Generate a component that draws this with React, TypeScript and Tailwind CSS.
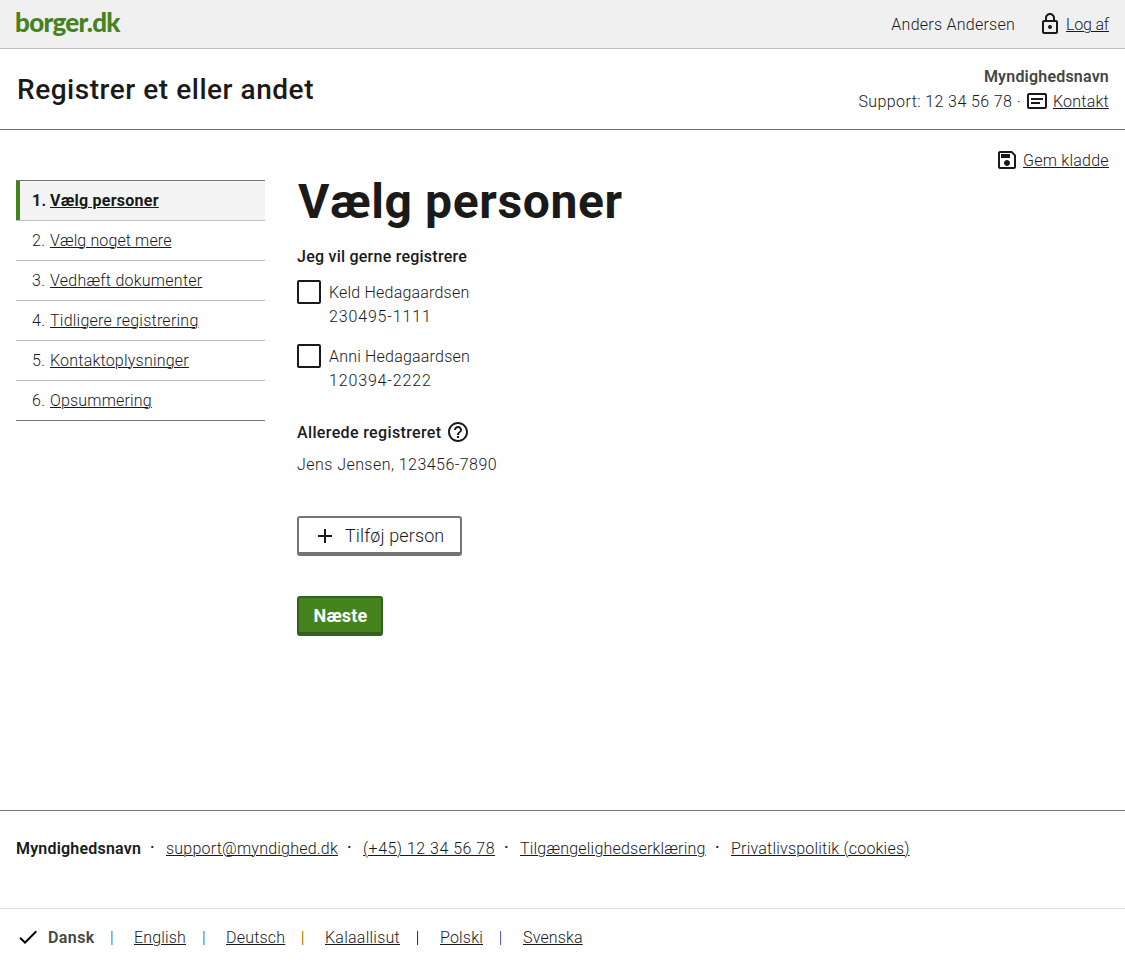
import type { ReactNode } from "react";

function Icon({ children, className = "" }: { children: ReactNode; className?: string }) {
  return (
    <svg viewBox="0 0 24 24" fill="currentColor" className={`size-6 shrink-0 ${className}`} aria-hidden="true">
      {children}
    </svg>
  );
}

const LINK = "underline decoration-1 underline-offset-[1px]";

const steps = [
  { label: "Vælg personer", tracking: "tracking-[0.25px]" },
  { label: "Vælg noget mere", tracking: "tracking-[0.12px]" },
  { label: "Vedhæft dokumenter", tracking: "tracking-[0.25px]" },
  { label: "Tidligere registrering", tracking: "tracking-[0.24px]" },
  { label: "Kontaktoplysninger", tracking: "tracking-[0.21px]" },
  { label: "Opsummering", tracking: "tracking-[0.17px]" },
];

const people = [
  { name: "Keld Hedagaardsen", cpr: "230495-1111" },
  { name: "Anni Hedagaardsen", cpr: "120394-2222" },
];

const footerLinks = [
  { label: "support@myndighed.dk", style: "w-[172px] tracking-[0.22px]" },
  { label: "(+45) 12 34 56 78", style: "w-[132px] tracking-[0.49px]" },
  { label: "Tilgængelighedserklæring", style: "w-[186px] tracking-[0.21px]" },
  { label: "Privatlivspolitik (cookies)", style: "w-[179px] tracking-[0.21px]" },
];

const languages = [
  { label: "English", style: "w-[52px] tracking-[0.16px]", bar: "border-[#d0a050] bg-[#90c8ff]" },
  { label: "Deutsch", style: "w-[59px] tracking-[0.2px]", bar: "border-[#d0a050] bg-[#90c8ff]" },
  { label: "Kalaallisut", style: "w-[75px] tracking-[0.25px]", bar: "border-[#c8921e] bg-[#bfe0f8]" },
  { label: "Polski", style: "w-[43px] tracking-[0.18px]", bar: "border-[#6b1a70] bg-[#e4f4e0]" },
  { label: "Svenska", style: "w-[60px] tracking-[0.15px]", bar: "border-[#6060b0] bg-[#f4ecd8]" },
];

function TopBar() {
  return (
    <header className="flex h-[49px] items-center justify-between border-b border-[#bfbfbf] bg-[#f0f0f0] px-4">
      <a className="-ml-px pb-1 font-['Lato',sans-serif] text-[26px] leading-none font-black tracking-[-0.7px] text-[#45831e]">
        borger.dk
      </a>
      <div className="flex items-center">
        <span className="mr-[23px] pt-0.5 tracking-[0.25px]">Anders Andersen</span>
        <Icon className="mr-1">
          <path d="M18 8h-1V6c0-2.76-2.24-5-5-5S7 3.24 7 6v2H6c-1.1 0-2 .9-2 2v10c0 1.1.9 2 2 2h12c1.1 0 2-.9 2-2V10c0-1.1-.9-2-2-2M9 6c0-1.66 1.34-3 3-3s3 1.34 3 3v2H9zm9 14H6V10h12zm-6-3c1.1 0 2-.9 2-2s-.9-2-2-2-2 .9-2 2 .9 2 2 2" />
        </Icon>
        <a className={`${LINK} w-[43px] pt-0.5 tracking-[-0.18px] whitespace-nowrap`}>Log af</a>
      </div>
    </header>
  );
}

function TitleBar() {
  return (
    <div className="flex h-[81px] items-center justify-between border-b border-[#747474] pr-4 pl-[17px]">
      <div className="pt-0.5 text-[28px] leading-8 font-medium tracking-[0.54px]">Registrer et eller andet</div>
      <div className="flex flex-col items-end">
        <div className="-mb-px pt-px font-semibold tracking-[0.2px] text-[#454545]">Myndighedsnavn</div>
        <div className="flex h-[26px] items-center">
          <span className="mr-1 pt-0.5 tracking-[0.4px]">Support: 12 34 56 78 ·</span>
          <Icon className="mr-1">
            <path d="M20 4H4c-1.1 0-1.99.9-1.99 2L2 18c0 1.1.9 2 2 2h16c1.1 0 2-.9 2-2V6c0-1.1-.9-2-2-2m0 14H4V6h16zM6 9h12v2H6zm0 4h9v2H6z" />
          </Icon>
          <a className={`${LINK} w-14 pt-0.5 tracking-[0.21px]`}>Kontakt</a>
        </div>
      </div>
    </div>
  );
}

function StepNav() {
  return (
    <nav className="w-[249px] shrink-0">
      <ol className="border-t border-[#747474]">
        {steps.map((s, i) => (
          <li
            key={s.label}
            className={`flex h-10 items-center border-b ${i === steps.length - 1 ? "border-[#747474]" : "border-[#bfbfbf]"}`}
          >
            <div className={`flex h-full flex-1 items-center ${i === 0 ? "border-l-4 border-[#45831e] bg-[#f4f4f4] pl-3 font-bold" : "pl-4"}`}>
              <span className="w-[18px] tracking-[0.4px]">{i + 1}.</span>
              <a className={`${LINK} ${s.tracking}`}>{s.label}</a>
            </div>
          </li>
        ))}
      </ol>
    </nav>
  );
}

function Content() {
  return (
    <section>
      <h1 className="ml-px text-5xl leading-[43px] font-bold tracking-[0.62px]">Vælg personer</h1>
      <h2 className="mt-[22px] font-medium tracking-[0.24px]">Jeg vil gerne registrere</h2>
      <div className="mt-[11px] flex flex-col gap-4">
        {people.map((p) => (
          <label key={p.cpr} className="flex gap-2">
            <span className="size-6 rounded-xs border-2 border-[#1a1a1a] bg-white" />
            <span className="-mb-px flex flex-col pt-px">
              <span className="tracking-[0.2px]">{p.name}</span>
              <span className="tracking-[0.85px]">{p.cpr}</span>
            </span>
          </label>
        ))}
      </div>
      <h2 className="mt-7 flex h-6 items-center font-medium">
        <span className="w-[149px] pt-0.5 tracking-[0.36px]">Allerede registreret</span>
        <Icon>
          <path d="M11 18h2v-2h-2zm1-16C6.48 2 2 6.48 2 12s4.48 10 10 10 10-4.48 10-10S17.52 2 12 2m0 18c-4.41 0-8-3.59-8-8s3.59-8 8-8 8 3.59 8 8-3.59 8-8 8m0-14c-2.21 0-4 1.79-4 4h2c0-1.1.9-2 2-2s2 .9 2 2c0 2-3 1.75-3 5h2c0-2.25 3-2.5 3-5 0-2.21-1.79-4-4-4" />
        </Icon>
      </h2>
      <p className="mt-[9px] tracking-[0.45px]">Jens Jensen, 123456-7890</p>
      <div className="mt-[39px] flex flex-col items-start gap-10">
        <button className="flex h-10 w-[165px] items-center rounded-[3px] border-2 border-b-4 border-[#747474] pt-px pl-[14px] text-lg">
          <Icon className="mr-2">
            <path d="M19 13h-6v6h-2v-6H5v-2h6V5h2v6h6z" />
          </Icon>
          <span className="pt-px tracking-[0.12px]">Tilføj person</span>
        </button>
        <button className="flex h-10 w-[86px] items-center justify-center rounded-[3px] border-2 border-b-4 border-[#37601f] bg-[#45831e] pt-0.5 pl-px text-lg font-bold tracking-[0.2px] text-white">
          Næste
        </button>
      </div>
    </section>
  );
}

function Footer() {
  return (
    <footer className="border-t border-[#747474]">
      <div className="flex h-[97px] pt-[26px] pl-4">
        <span className="w-[125px] font-semibold tracking-[0.2px]">Myndighedsnavn</span>
        {footerLinks.map((l) => (
          <span key={l.label} className="flex">
            <span className="-mt-px w-[25px] pl-[9px] font-medium">·</span>
            <a className={`${LINK} whitespace-nowrap ${l.style}`}>{l.label}</a>
          </span>
        ))}
      </div>
      <div className="flex h-[53px] items-center border-t border-[#dcdcdc] pt-1 pl-4">
        <Icon className="mr-2 text-black">
          <path d="M9 16.17 4.83 12l-1.42 1.41L9 19 21 7l-1.41-1.41z" />
        </Icon>
        <span className="w-[46px] pt-0.5 font-semibold tracking-[0.4px] text-[#454545]">Dansk</span>
        {languages.map((l) => (
          <span key={l.label} className="flex items-center">
            <span className={`mt-px mr-[21px] ml-[17px] h-3.5 w-0.5 border-l ${l.bar}`} />
            <a className={`${LINK} pt-0.5 whitespace-nowrap ${l.style}`}>{l.label}</a>
          </span>
        ))}
      </div>
    </footer>
  );
}

export default function App() {
  return (
    <div className="flex h-[961px] flex-col bg-white font-['Roboto',sans-serif] text-base leading-6 font-[340] text-[#1a1a1a]">
      <TopBar />
      <TitleBar />
      <div className="flex h-[50px] items-center justify-end pt-[10px] pr-4">
        <Icon className="mr-1">
          <path d="M17 3H5c-1.11 0-2 .9-2 2v14c0 1.1.89 2 2 2h14c1.1 0 2-.9 2-2V7zm2 16H5V5h11.17L19 7.83zm-7-7c-1.66 0-3 1.34-3 3s1.34 3 3 3 3-1.34 3-3-1.34-3-3-3M6 6h9v4H6z" />
        </Icon>
        <a className={`${LINK} w-[86px] pt-px tracking-[0.25px]`}>Gem kladde</a>
      </div>
      <main className="flex flex-1 gap-8 px-4">
        <StepNav />
        <Content />
      </main>
      <Footer />
    </div>
  );
}
